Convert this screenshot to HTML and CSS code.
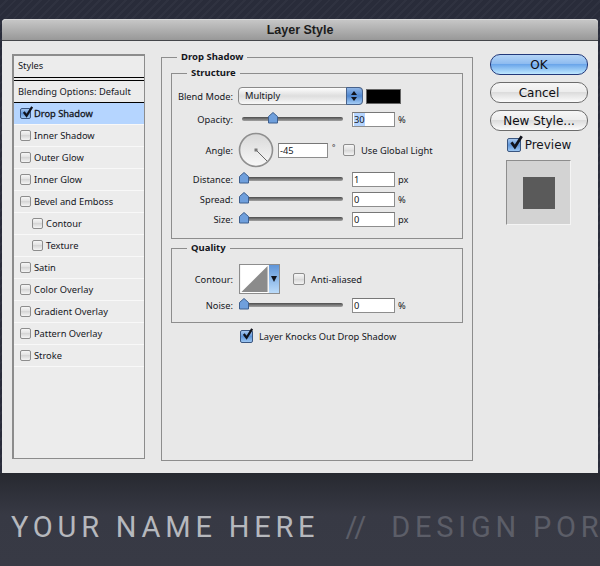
FILE: index.html
```html
<!DOCTYPE html>
<html lang="en">
<head>
    <meta charset="UTF-8">
    <title>Layer Style</title>
    <link rel="stylesheet" href="styles.css">
</head>
<body>
    <svg class="defs" width="0" height="0">
        <symbol id="tick" viewBox="0 0 14 14">
            <path d="M3 6.5 L6 10.5 L12 1" fill="none" stroke="#10131c" stroke-width="2.4"/>
        </symbol>
        <symbol id="thumb" viewBox="0 0 10 12">
            <path d="M5 .5 L9.5 4.5 V11 H.5 V4.5 Z" fill="#6f9fdc" stroke="#3d5f8f" stroke-width="1"/>
        </symbol>
    </svg>

    <div class="window">
        <div class="titlebar">Layer Style</div>
        <div class="window-body">

            <!-- Styles list -->
            <div class="styles-list">
                <div class="list-head">Styles</div>
                <div class="list-blend">Blending Options: Default</div>
                <div class="list-row selected"><span class="check on"><svg><use href="#tick"/></svg></span><b>Drop Shadow</b></div>
                <div class="list-row"><span class="check"></span>Inner Shadow</div>
                <div class="list-row"><span class="check"></span>Outer Glow</div>
                <div class="list-row"><span class="check"></span>Inner Glow</div>
                <div class="list-row"><span class="check"></span>Bevel and Emboss</div>
                <div class="list-row sub"><span class="check"></span>Contour</div>
                <div class="list-row sub"><span class="check"></span>Texture</div>
                <div class="list-row"><span class="check"></span>Satin</div>
                <div class="list-row"><span class="check"></span>Color Overlay</div>
                <div class="list-row"><span class="check"></span>Gradient Overlay</div>
                <div class="list-row"><span class="check"></span>Pattern Overlay</div>
                <div class="list-row"><span class="check"></span>Stroke</div>
            </div>

            <!-- Main settings -->
            <fieldset class="group outer">
                <legend>Drop Shadow</legend>

                <fieldset class="group structure">
                    <legend>Structure</legend>
                    <div class="form-row blend-row">
                        <label>Blend Mode:</label>
                        <div class="select">Multiply<span class="stepper"><i class="up"></i><i class="down"></i></span></div>
                        <span class="swatch"></span>
                    </div>
                    <div class="form-row opacity-row">
                        <label>Opacity:</label>
                        <div class="slider"><svg class="knob at-30"><use href="#thumb"/></svg></div>
                        <span class="input"><span class="hilite">30</span></span>
                        <span class="unit">%</span>
                    </div>
                    <div class="form-row angle-row">
                        <label>Angle:</label>
                        <svg class="dial" width="36" height="36" viewBox="0 0 36 36">
                            <defs>
                                <linearGradient id="dialfill" x1="0" y1="0" x2="0" y2="1">
                                    <stop offset="0" stop-color="#d8d8d8"/>
                                    <stop offset="1" stop-color="#f8f8f8"/>
                                </linearGradient>
                            </defs>
                            <circle cx="18" cy="18" r="16.5" fill="url(#dialfill)" stroke="#8f8f8f" stroke-width="1.6"/>
                            <path d="M18 18 L29 29" stroke="#666" stroke-width="1"/>
                            <rect x="16.5" y="16.5" width="3" height="3" fill="#777"/>
                        </svg>
                        <span class="input wide">-45</span>
                        <span class="degree">°</span>
                        <span class="check"></span>
                        <span class="check-label">Use Global Light</span>
                    </div>
                    <div class="form-row px-row">
                        <label>Distance:</label>
                        <div class="slider"><svg class="knob"><use href="#thumb"/></svg></div>
                        <span class="input">1</span>
                        <span class="unit">px</span>
                    </div>
                    <div class="form-row px-row">
                        <label>Spread:</label>
                        <div class="slider"><svg class="knob"><use href="#thumb"/></svg></div>
                        <span class="input">0</span>
                        <span class="unit">%</span>
                    </div>
                    <div class="form-row px-row">
                        <label>Size:</label>
                        <div class="slider"><svg class="knob"><use href="#thumb"/></svg></div>
                        <span class="input">0</span>
                        <span class="unit">px</span>
                    </div>
                </fieldset>

                <fieldset class="group quality">
                    <legend>Quality</legend>
                    <div class="form-row contour-row">
                        <label>Contour:</label>
                        <div class="contour">
                            <svg width="30" height="30" viewBox="0 0 30 30">
                                <rect width="30" height="30" fill="#fff"/>
                                <path d="M1 29 L29 1 V29 Z" fill="#8b8b8b"/>
                            </svg>
                            <span class="contour-arrow"></span>
                        </div>
                        <span class="check"></span>
                        <span class="check-label">Anti-aliased</span>
                    </div>
                    <div class="form-row noise-row">
                        <label>Noise:</label>
                        <div class="slider"><svg class="knob"><use href="#thumb"/></svg></div>
                        <span class="input">0</span>
                        <span class="unit">%</span>
                    </div>
                </fieldset>

                <div class="knockout">
                    <span class="check on"><svg><use href="#tick"/></svg></span>
                    <span>Layer Knocks Out Drop Shadow</span>
                </div>
            </fieldset>

            <!-- Buttons -->
            <div class="actions">
                <button class="btn default">OK</button>
                <button class="btn">Cancel</button>
                <button class="btn">New Style...</button>
                <div class="preview-check">
                    <span class="check on big"><svg><use href="#tick"/></svg></span>Preview
                </div>
                <div class="preview"><div class="preview-box"></div></div>
            </div>
        </div>
    </div>

    <div class="footer">
        <span class="name">YOUR NAME HERE</span><span class="slashes">//</span><span class="tagline">DESIGN POR</span>
    </div>
</body>
</html>
```

FILE: styles.css
```css
html, body {
    margin: 0;
    height: 566px;
    overflow: hidden;
}

body {
    width: 600px;
    padding-top: 19px;
    box-sizing: border-box;
    font-family: "Noto Sans", sans-serif;
    font-size: 9.3px;
    color: #14161c;
    background-color: #292c3a;
    background-image: repeating-linear-gradient(135deg, #292c3a 0, #292c3a 4px, #2f3240 4px, #2f3240 6px);
}

.defs {
    position: absolute;
}

/* Window */
.window {
    margin: 0 2px;
    height: 454px;
    background: #e8e8e8;
    border-radius: 4px 4px 0 0;
}

.titlebar {
    height: 20px;
    line-height: 21px;
    text-align: center;
    font-family: "Liberation Sans", sans-serif;
    font-size: 12.5px;
    font-weight: bold;
    color: #1c1c1c;
    background: linear-gradient(#c6c6c6, #989898);
    border-top: 1px solid #d8d8d8;
    border-bottom: 1px solid #44464a;
    border-radius: 4px 4px 0 0;
}

.window-body {
    display: flex;
    align-items: flex-start;
    padding-left: 10px;
}

/* Styles list */
.styles-list {
    width: 130px;
    height: 402px;
    margin-top: 13px;
    flex: none;
    background: #ececec;
    border: 2px solid #8c8c8c;
    border-right-width: 1px;
    border-bottom-width: 1px;
}

.list-head {
    height: 21px;
    line-height: 20px;
    padding-left: 4px;
    border-bottom: 1px solid #000;
}

.list-blend {
    height: 21px;
    line-height: 21px;
    margin-top: 2px;
    padding-left: 4px;
    border-top: 1px solid #000;
    border-bottom: 1px solid #000;
}

.list-row {
    display: flex;
    align-items: center;
    gap: 3px;
    height: 21px;
    padding-left: 6px;
    border-bottom: 1px solid #f8f8f8;
}

.list-row b {
    font-weight: normal;
    -webkit-text-stroke: .3px #14161c;
}

.list-row.selected {
    background: #b5d5ff;
}

.list-row.sub {
    padding-left: 18px;
}

/* Checkboxes */
.check {
    position: relative;
    display: inline-block;
    flex: none;
    width: 9px;
    height: 9px;
    border: 1px solid #8d8d8d;
    border-radius: 2px;
    background: linear-gradient(#f6f6f6 0, #e2e2e2 45%, #d6d6d6 50%, #f4f4f4 100%);
}

.check.on {
    border-color: #3a5680;
    background: linear-gradient(#a8c8ef, #5f95d8 50%, #9cc6f2);
}

.check svg {
    position: absolute;
    left: 0;
    top: -3px;
    width: 13px;
    height: 13px;
}

.check.big {
    width: 12px;
    height: 12px;
}

.check.big svg {
    width: 16px;
    height: 16px;
    top: -4px;
}

/* Groups */
.group {
    margin: 0;
    padding: 0;
    min-width: 0;
    border: 1px solid #8d8d8d;
}

.group legend {
    padding: 0 4px;
    margin-left: 15px;
    height: 12px;
    line-height: 12px;
    font-family: "Noto Sans", sans-serif;
    font-size: 9.5px;
    font-weight: bold;
    color: #14161c;
}

.outer {
    flex: none;
    box-sizing: border-box;
    width: 312px;
    height: 410px;
    margin: 10px 0 0 16px;
    padding: 4px 9px 0;
}

.outer > legend {
    margin-left: 6px;
}

.structure {
    box-sizing: border-box;
    height: 172px;
}

.quality {
    box-sizing: border-box;
    height: 81px;
    margin-top: 3px;
}

/* Form rows */
.form-row {
    display: flex;
    align-items: center;
    height: 20px;
}

.form-row label {
    width: 61px;
    margin-right: 4px;
    flex: none;
    text-align: right;
}

.blend-row {
    height: 18px;
    margin-top: 8px;
}

.opacity-row {
    margin-top: 4px;
}

.angle-row {
    height: 36px;
    margin-top: 3px;
    margin-bottom: 1px;
}

.select {
    position: relative;
    box-sizing: border-box;
    width: 125px;
    height: 18px;
    line-height: 16px;
    margin-left: 1px;
    padding-left: 6px;
    border: 1px solid #8a8a8a;
    border-radius: 4px;
    background: linear-gradient(#fdfdfd, #dedede 50%, #f8f8f8);
}

.stepper {
    position: absolute;
    right: -1px;
    top: -1px;
    width: 17px;
    height: 18px;
    border: 1px solid #47628c;
    box-sizing: border-box;
    border-radius: 0 4px 4px 0;
    background: linear-gradient(#8fb5e6, #4e86cf 50%, #a5cdf6);
}

.stepper i {
    position: absolute;
    left: 4px;
    width: 0;
    height: 0;
    border-left: 3px solid transparent;
    border-right: 3px solid transparent;
}

.stepper .up {
    top: 3px;
    border-bottom: 4px solid #10131c;
}

.stepper .down {
    bottom: 3px;
    border-top: 4px solid #10131c;
}

.swatch {
    width: 33px;
    height: 13px;
    margin-left: 3px;
    background: #000;
    border: 1px solid #666;
}

.slider {
    position: relative;
    width: 101px;
    height: 4px;
    margin: 0 9px 0 5px;
    flex: none;
    border-radius: 2px;
    background: linear-gradient(#4c4c4c, #a2a2a2);
}

.knob {
    position: absolute;
    left: -3px;
    top: -5px;
    width: 10px;
    height: 12px;
}

.knob.at-30 {
    left: 26px;
}

.dial {
    margin-left: 1px;
}

.input {
    box-sizing: border-box;
    width: 43px;
    height: 15px;
    line-height: 13px;
    padding-left: 1px;
    background: #fff;
    border: 1px solid #8d8d8d;
    border-top-color: #777;
}

.input.wide {
    width: 50px;
    margin-left: 4px;
}

.hilite {
    background: #b5d5ff;
}

.unit {
    margin-left: 3px;
}

.degree {
    width: 15px;
    padding-left: 4px;
    box-sizing: border-box;
    margin-bottom: 6px;
    font-size: 8px;
}

.angle-row .check,
.contour-row .check {
    width: 10px;
    height: 10px;
}

.check-label {
    margin-left: 6px;
}

.contour-row {
    height: 30px;
    margin-top: 10px;
}

.contour {
    display: flex;
    margin-left: 2px;
    margin-right: 13px;
    height: 30px;
    border: 1px solid #8d8d8d;
    box-sizing: border-box;
}

.contour svg {
    display: block;
    width: 29px;
    height: 28px;
}

.contour-arrow {
    position: relative;
    width: 10px;
    background: linear-gradient(#5f95d8, #bcdcfa);
}

.contour-arrow::after {
    content: "";
    position: absolute;
    left: 2px;
    top: 11px;
    border-left: 3px solid transparent;
    border-right: 3px solid transparent;
    border-top: 6px solid #10131c;
}

.noise-row {
    margin-top: 1px;
}

.knockout {
    display: flex;
    align-items: center;
    gap: 6px;
    margin: 7px 0 0 69px;
}

.knockout .check {
    width: 11px;
    height: 11px;
}

/* Buttons */
.actions {
    flex: none;
    display: flex;
    flex-direction: column;
    width: 98px;
    margin: 13px 0 0 17px;
}

.btn {
    display: block;
    width: 98px;
    height: 21px;
    padding: 0;
    margin-bottom: 7px;
    font-family: "DejaVu Sans", sans-serif;
    font-size: 12px;
    color: #0e0e12;
    border: 1px solid #6c6c6c;
    border-radius: 10px;
    background: linear-gradient(#f6f6f6, #ededed 45%, #dcdcdc 50%, #fbfbfb);
}

.btn.default {
    border-color: #23397a;
    background: linear-gradient(#b4d4f6, #8fbcf0 45%, #6ba6ea 50%, #bfe8ff);
}

.preview-check {
    display: flex;
    align-items: center;
    justify-content: center;
    gap: 4px;
    height: 16px;
    margin-top: -1px;
    font-family: "DejaVu Sans", sans-serif;
    font-size: 12px;
}

.preview {
    box-sizing: border-box;
    width: 65px;
    height: 65px;
    margin: 7px 0 0 16px;
    padding: 16px;
    background: #d3d3d3;
    border: 1px solid #f4f4f4;
    border-top-color: #8d8d8d;
    border-left-color: #8d8d8d;
}

.preview-box {
    width: 32px;
    height: 32px;
    background: #5a5a5a;
}

/* Footer strip behind the dialog */
.footer {
    height: 93px;
    box-sizing: border-box;
    padding: 38px 0 0 11px;
    white-space: nowrap;
    overflow: hidden;
    font-family: Roboto, sans-serif;
    font-size: 29px;
    line-height: 32px;
    letter-spacing: 4.8px;
    background: linear-gradient(#272930, #373944 45%, #383a45);
}

.name {
    color: #b6b8bd;
}

.slashes {
    margin: 0 25px 0 26px;
    letter-spacing: 0;
    color: #5c5e68;
}

.tagline {
    color: #5c5e68;
}
```
